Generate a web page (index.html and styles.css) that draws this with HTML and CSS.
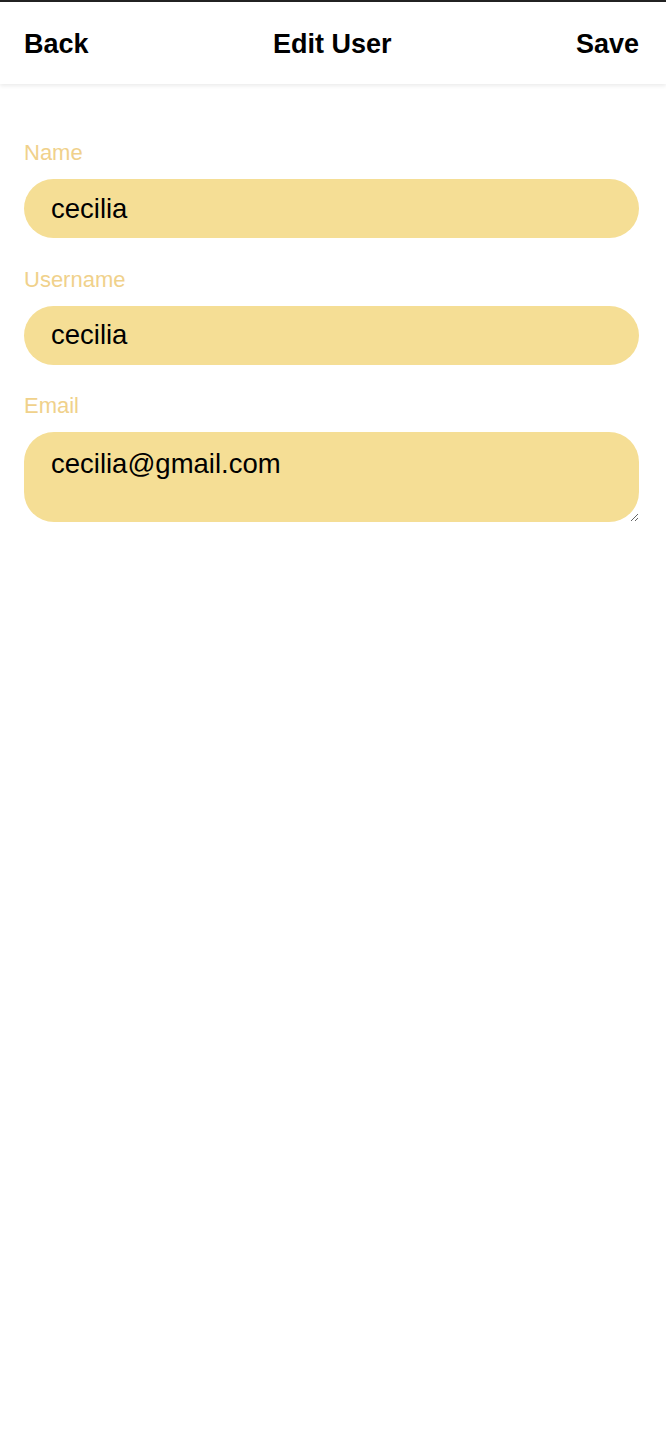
FILE: index.html
```
<!DOCTYPE html>
<html lang="en">
<head>
<meta charset="utf-8">
<title>Edit User</title>
<link rel="stylesheet" href="styles.css">
</head>
<body>
<div class="page">
  <header class="topbar">
    <span class="nav-btn">Back</span>
    <span class="title">Edit User</span>
    <span class="nav-btn">Save</span>
  </header>
  <form class="form">
    <label class="field">
      <span class="label">Name</span>
      <input class="input" type="text" value="cecilia">
    </label>
    <label class="field">
      <span class="label">Username</span>
      <input class="input" type="text" value="cecilia">
    </label>
    <label class="field">
      <span class="label">Email</span>
      <textarea class="input textarea">cecilia@gmail.com</textarea>
    </label>
  </form>
</div>
</body>
</html>
```
FILE: styles.css
```
html, body {
  margin: 0;
  padding: 0;
  background: #fff;
}
body {
  font-family: "Liberation Sans", Arial, sans-serif;
  color: #000;
}
.page {
  border-top: 2px solid #222;
  min-height: 1446px;
}
.topbar {
  height: 82px;
  box-sizing: border-box;
  padding: 2px 27px 0 24px;
  display: flex;
  align-items: center;
  justify-content: space-between;
  box-shadow: 0 2px 4px rgba(0,0,0,0.08);
  font-size: 27px;
  font-weight: bold;
}
.form {
  display: flex;
  flex-direction: column;
  gap: 28.5px;
  padding: 56px 27px 0 24px;
}
.field {
  display: flex;
  flex-direction: column;
  gap: 14px;
}
.label {
  font-size: 22px;
  color: #f0d18b;
  line-height: 25px;
}
.input {
  box-sizing: border-box;
  width: 100%;
  height: 59px;
  border: none;
  outline: none;
  border-radius: 30px;
  background: #f5de95;
  font-family: "Liberation Sans", Arial, sans-serif;
  font-size: 27.5px;
  color: #000;
  padding: 0 27px;
  margin: 0;
}
.textarea {
  display: block;
  height: 90px;
  padding: 16px 27px 14px;
  line-height: 31px;
  resize: vertical;
}
```
